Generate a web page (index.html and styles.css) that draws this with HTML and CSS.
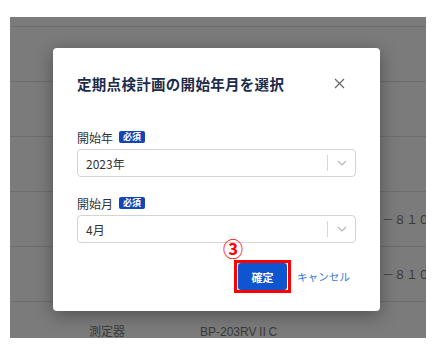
FILE: index.html
```html
<!DOCTYPE html>
<html lang="ja">

<head>
    <meta charset="UTF-8">
    <meta name="viewport" content="width=device-width, initial-scale=1.0">
    <title>開始年月を選択</title>
    <link rel="stylesheet" href="styles.css">
</head>

<body>
    <div class="screen">
        <!-- dimmed table behind the dialog -->
        <div class="table">
            <div class="row row-head"></div>
            <div class="row"></div>
            <div class="row"></div>
            <div class="row"></div>
            <div class="row"><span class="cell-code">－８１０</span></div>
            <div class="row"><span class="cell-code">－８１０</span></div>
            <div class="row">
                <span class="cell-name">測定器</span>
                <span class="cell-model">BP-203RVⅡC</span>
            </div>
        </div>

        <div class="modal">
            <div class="modal-header">
                <h2 class="modal-title">定期点検計画の開始年月を選択</h2>
                <button class="close-btn" aria-label="閉じる">
                    <svg width="11" height="11" viewBox="0 0 11 11">
                        <path d="M1 1L10 10M10 1L1 10" stroke="#6b6b6b" stroke-width="1.3" fill="none" />
                    </svg>
                </button>
            </div>

            <div class="field">
                <div class="field-label">開始年 <span class="badge">必須</span></div>
                <div class="select">
                    <span class="select-value">2023年</span>
                    <span class="select-sep"></span>
                    <svg class="select-arrow" width="10" height="6" viewBox="0 0 10 6">
                        <path d="M1 1L5 5L9 1" stroke="#b5b5b5" stroke-width="1.2" fill="none" />
                    </svg>
                </div>
            </div>

            <div class="field">
                <div class="field-label">開始月 <span class="badge">必須</span></div>
                <div class="select">
                    <span class="select-value">4月</span>
                    <span class="select-sep"></span>
                    <svg class="select-arrow" width="10" height="6" viewBox="0 0 10 6">
                        <path d="M1 1L5 5L9 1" stroke="#b5b5b5" stroke-width="1.2" fill="none" />
                    </svg>
                </div>
            </div>

            <div class="modal-footer">
                <span class="highlight">
                    <span class="step">③</span>
                    <button class="btn-primary">確定</button>
                </span>
                <a class="btn-link" href="#">キャンセル</a>
            </div>
        </div>
    </div>
</body>

</html>
```

FILE: styles.css
```css
body {
    margin: 0;
    background-color: white;
    font-family: "Noto Sans CJK JP", "Noto Sans", sans-serif;
}

.screen {
    position: relative;
    width: 416px;
    height: 321px;
    margin: 17px 0 0 10px;
    background-color: #7b7b7b;
    overflow: hidden;
}

.row {
    height: 54px;
    border-bottom: 1px solid #6d6d6d;
    display: flex;
    align-items: center;
    font-size: 12px;
    color: #3a3a3a;
    white-space: nowrap;
}

.row-head {
    height: 9px;
}

.cell-code {
    margin-left: 372px;
    font-family: "Liberation Mono", "Noto Sans CJK JP", monospace;
}

.cell-name {
    margin-left: 79px;
    margin-top: 3px;
    width: 111px;
}

.cell-model {
    margin-top: 3px;
    font-family: "Liberation Sans", "Noto Sans CJK JP", sans-serif;
}

.modal {
    position: absolute;
    left: 43px;
    top: 31px;
    width: 327px;
    height: 263px;
    box-sizing: border-box;
    padding: 23px 24px 24px;
    background-color: white;
    border-radius: 4px;
    box-shadow: 0 4px 18px rgba(0, 0, 0, 0.35);
}

.modal-header {
    display: flex;
    align-items: center;
    justify-content: space-between;
    height: 24px;
    margin-bottom: 33px;
}

.modal-title {
    margin: 0;
    font-size: 14.5px;
    font-weight: bold;
    color: #1c2b4a;
    letter-spacing: 0.3px;
}

.close-btn {
    background: none;
    border: none;
    padding: 0;
    margin-right: 11px;
    display: flex;
}

.field {
    margin-bottom: 17px;
}

.field-label {
    display: flex;
    align-items: center;
    gap: 6px;
    height: 18px;
    margin-bottom: 3px;
    font-size: 12px;
    color: #333;
}

.badge {
    background-color: #1245b5;
    color: white;
    font-size: 9px;
    font-weight: bold;
    line-height: 12px;
    padding: 0 4px;
    border-radius: 2px;
}

.select {
    display: flex;
    align-items: center;
    height: 28px;
    box-sizing: border-box;
    border: 1px solid #d3d3d3;
    border-radius: 4px;
    padding-left: 8px;
    font-size: 12px;
    color: #333;
}

.select-value {
    flex-grow: 1;
}

.select-sep {
    width: 1px;
    height: 16px;
    background-color: #d6d6d6;
}

.select-arrow {
    margin: 0 8px 0 9px;
}

.modal-footer {
    display: flex;
    justify-content: flex-end;
    align-items: center;
    gap: 6px;
    margin-top: 1px;
}

.highlight {
    position: relative;
    display: flex;
    border: 3px solid #f00;
    padding: 0 1px;
}

.step {
    position: absolute;
    left: -14px;
    top: -26px;
    font-size: 20px;
    font-weight: bold;
    color: #f00;
    line-height: 24px;
}

.btn-primary {
    width: 49px;
    height: 27px;
    background-color: #0f55cf;
    color: white;
    border: none;
    border-radius: 3px;
    font-family: inherit;
    font-size: 11px;
    font-weight: bold;
}

.btn-link {
    color: #3475d8;
    font-size: 10.6px;
    text-decoration: none;
    margin-right: 6px;
}
```
